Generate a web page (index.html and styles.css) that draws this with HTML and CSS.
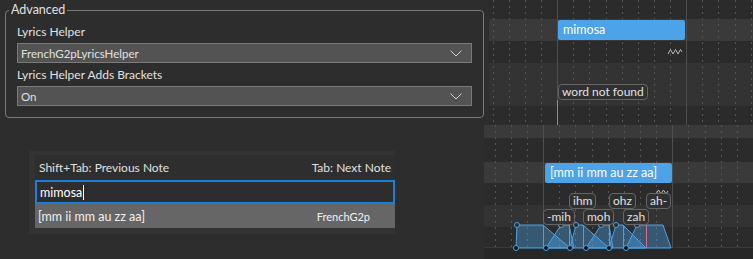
FILE: index.html
```html
<!DOCTYPE html>
<html lang="en">
<head>
  <meta charset="UTF-8">
  <title>Lyrics Helper</title>
  <link rel="stylesheet" href="styles.css">
</head>
<body>
  <div class="screen">
    <div class="settings">
      <fieldset class="group">
        <legend>Advanced</legend>
        <div class="field-label">Lyrics Helper</div>
        <div class="combo">
          <span>FrenchG2pLyricsHelper</span>
          <svg class="chevron" width="12" height="7" viewBox="0 0 12 7"><path d="M0.5 0.5 L6 6 L11.5 0.5"/></svg>
        </div>
        <div class="field-label second">Lyrics Helper Adds Brackets</div>
        <div class="combo">
          <span>On</span>
          <svg class="chevron" width="12" height="7" viewBox="0 0 12 7"><path d="M0.5 0.5 L6 6 L11.5 0.5"/></svg>
        </div>
      </fieldset>
    </div>

    <div class="roll roll-top">
      <div class="band dark"></div>
      <div class="band light"></div>
      <div class="band dark"></div>
      <div class="band mid"></div>
      <div class="band dark"></div>
      <svg class="grid" width="264" height="125">
        <path class="dots" d="M4.5 0V125M20.5 0V125M36.5 0V125M52.5 0V125M84.5 0V125M100.5 0V125M117.5 0V125M133.5 0V125M149.5 0V125M165.5 0V125M181.5 0V125M213.5 0V125M229.5 0V125M246.5 0V125M262.5 0V125"/>
        <path class="bar" d="M68.5 0V100M197.5 0V125"/>
        <path class="cursor" d="M68.5 100V125"/>
        <path class="vibrato" d="M179 54L181.5 49.5L184 54L186.5 49.5L189 54L191.5 49.5L193 52"/>
      </svg>
      <div class="note" style="left: 69px; top: 20px; width: 127px;">mimosa</div>
      <div class="tag" style="left: 69px; top: 84px;">word not found</div>
    </div>

    <div class="lyric-area">
      <div class="lyric-host">
        <div class="lyric-box">
          <div class="hints">
            <span>Shift+Tab: Previous Note</span>
            <span>Tab: Next Note</span>
          </div>
          <div class="lyric-input">mimosa<span class="caret"></span></div>
          <div class="suggestion">
            <span>[mm ii mm au zz aa]</span>
            <span class="source">FrenchG2p</span>
          </div>
        </div>
      </div>
    </div>

    <div class="roll roll-bottom">
      <div class="band light"></div>
      <div class="band dark"></div>
      <div class="band light"></div>
      <div class="band dark"></div>
      <div class="band mid"></div>
      <div class="band dark"></div>
      <div class="band deep"></div>
      <svg class="grid" width="269" height="134">
        <path class="dots" d="M11.5 0V122M27.5 0V122M43.5 0V122M75.5 0V122M91.5 0V122M108.5 0V122M124.5 0V122M140.5 0V122M156.5 0V122M172.5 0V122M204.5 0V122M221.5 0V122M237.5 0V122M253.5 0V122"/>
        <path class="bar" d="M59.5 0V123M188.5 0V123"/>
        <path class="vibrato" d="M172 69L174.5 65L177 69L179.5 65L182 69L184 66"/>
        <g class="envelope">
          <polygon points="32,123 33,100 59,100 86,123"/>
          <polygon points="62,123 77,100 85,100 90,123"/>
          <polygon points="86,123 92,100 99,100 125,123"/>
          <polygon points="102,123 117,100 125,100 129,123"/>
          <polygon points="125,123 132,100 139,100 162,123"/>
          <polygon points="142,123 153,100 179,100 187,123"/>
        </g>
        <path class="cursor" d="M59.5 100V123M85.5 100V123M99.5 100V123M125.5 100V123M139.5 100V123M162.5 100V123"/>
        <g class="handles">
          <circle cx="33" cy="100" r="2.5"/><circle cx="77" cy="100" r="2.5"/><circle cx="92" cy="100" r="2.5"/>
          <circle cx="117" cy="100" r="2.5"/><circle cx="132" cy="100" r="2.5"/><circle cx="153" cy="100" r="2.5"/>
        </g>
        <g class="handles low">
          <circle cx="32" cy="123" r="2.5"/><circle cx="62" cy="123" r="2.5"/><circle cx="86" cy="123" r="2.5"/>
          <circle cx="102" cy="123" r="2.5"/><circle cx="125" cy="123" r="2.5"/><circle cx="142" cy="123" r="2.5"/>
        </g>
      </svg>
      <div class="note" style="left: 61px; top: 38px; width: 127px;">[mm ii mm au zz aa]</div>
      <div class="tag" style="left: 85px; top: 68px;">ihm</div>
      <div class="tag" style="left: 125px; top: 68px;">ohz</div>
      <div class="tag" style="left: 162px; top: 68px;">ah-</div>
      <div class="tag" style="left: 59px; top: 84px;">-mih</div>
      <div class="tag" style="left: 99px; top: 84px;">moh</div>
      <div class="tag" style="left: 139px; top: 84px;">zah</div>
    </div>
  </div>
</body>
</html>
```

FILE: styles.css
```css
body {
  margin: 0;
  background-color: #2d2d2d;
  color: #e0e0e0;
  font-family: Lato, "Noto Sans", sans-serif;
  font-size: 12px;
}

.screen {
  display: grid;
  grid-template-columns: 484px 1fr;
  grid-template-rows: 125px 134px;
  width: 753px;
  height: 259px;
  overflow: hidden;
}

/* settings group */

.settings {
  padding-left: 5px;
}

.group {
  box-sizing: border-box;
  width: 479px;
  margin: 2px 0 0 0;
  padding: 6px 11px 11px 11px;
  border: 1px solid #7a7a7a;
  border-radius: 4px;
}

.group legend {
  padding: 0 2px;
  margin-left: -8px;
  line-height: 16px;
  font-size: 12.5px;
}

.field-label {
  line-height: 16px;
}

.field-label.second {
  margin-top: 4px;
}

.combo {
  box-sizing: border-box;
  display: flex;
  align-items: center;
  justify-content: space-between;
  height: 20px;
  margin-top: 3px;
  padding: 0 9px 0 3px;
  background-color: #535353;
  border: 1px solid #7a7a7a;
  font-size: 11.5px;
}

.chevron path {
  fill: none;
  stroke: #d0d0d0;
  stroke-width: 1;
}

/* piano roll */

.roll {
  position: relative;
  display: grid;
  overflow: hidden;
}

.roll-top {
  margin-left: 5px;
  grid-template-rows: 19px 22px 22px 43px 19px;
}

.roll-bottom {
  grid-template-rows: 13px 24px 21px 22px 22px 20px 12px;
}

.band.dark {
  background-color: #2b2b2b;
}

.band.light {
  background-color: #3a3a3a;
}

.band.mid {
  background-color: #333;
}

.band.deep {
  background-color: #272727;
  border-top: 1px solid #3a3a3a;
}

.grid {
  position: absolute;
  left: 0;
  top: 0;
}

.grid .dots {
  stroke: #555;
  stroke-width: 1;
  stroke-dasharray: 2 4;
}

.grid .bar {
  stroke: #4e4e4e;
  stroke-width: 1;
}

.grid .cursor {
  stroke: #e0668f;
  stroke-width: 1;
}

.grid .vibrato {
  fill: none;
  stroke: #bbb;
  stroke-width: 1;
}

.envelope polygon {
  fill: rgba(76, 163, 232, 0.38);
  stroke: #4ca3e8;
  stroke-width: 1;
}

.handles circle {
  fill: #2b2b2b;
  stroke: #4ca3e8;
  stroke-width: 1;
}

.handles.low circle {
  fill: #111;
}

.note {
  position: absolute;
  box-sizing: border-box;
  height: 20px;
  padding-left: 5px;
  background-color: #4ca3e8;
  border-radius: 2px;
  color: #fff;
  font-size: 12.5px;
  line-height: 20px;
  white-space: nowrap;
}

.tag {
  position: absolute;
  height: 14px;
  padding: 0 3px;
  background-color: rgba(48, 48, 48, 0.85);
  border: 1px solid #666;
  border-radius: 4px;
  color: #e0e0e0;
  font-size: 12px;
  line-height: 14px;
  white-space: nowrap;
}

/* lyric popup */

.lyric-area {
  padding: 26px 0 0 29px;
}

.lyric-host {
  width: 366px;
  height: 83px;
  box-sizing: border-box;
  padding: 4px 0 6px 6px;
  background-color: #333;
}

.lyric-box {
  background-color: #2e2e2e;
}

.hints {
  display: flex;
  justify-content: space-between;
  height: 25px;
  padding: 0 4px;
  line-height: 25px;
}

.lyric-input {
  box-sizing: border-box;
  display: flex;
  align-items: center;
  height: 24px;
  padding-left: 3px;
  border: 2px solid #1a7fd6;
  background-color: #2d2d2d;
  color: #fff;
  font-size: 12.5px;
}

.caret {
  width: 1px;
  height: 15px;
  margin-left: 1px;
  background-color: #fff;
}

.suggestion {
  display: flex;
  align-items: center;
  justify-content: space-between;
  height: 24px;
  padding: 0 25px 0 3px;
  background-color: #666;
  color: #f0f0f0;
  font-size: 12.5px;
}

.suggestion .source {
  font-size: 11px;
}
```
